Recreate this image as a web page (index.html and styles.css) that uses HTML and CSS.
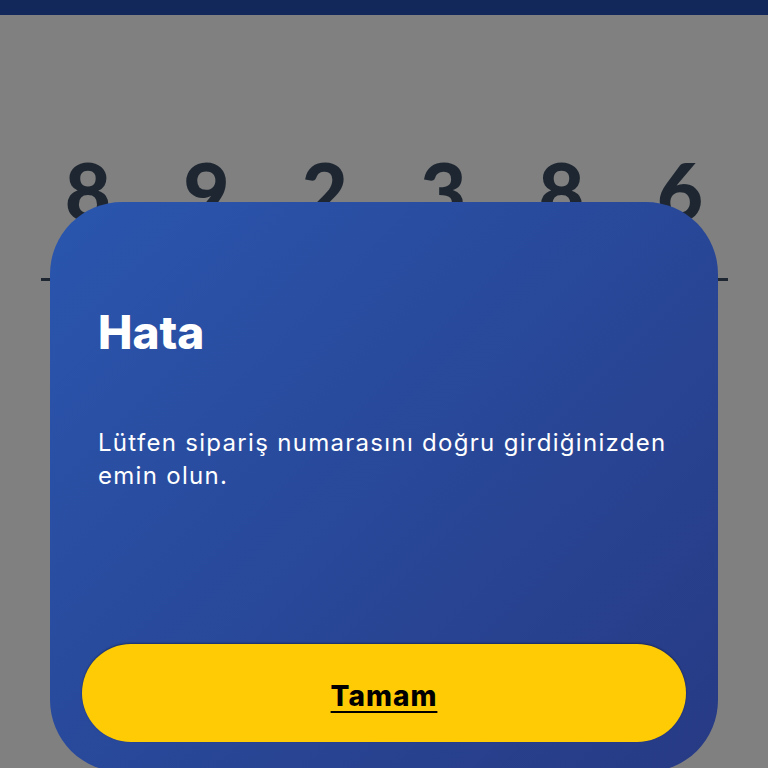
FILE: index.html
```html
<!DOCTYPE html>
<html lang="tr">

<head>
  <meta charset="UTF-8">
  <meta name="viewport" content="width=device-width, initial-scale=1.0">
  <title>Sipariş Takibi</title>
  <link rel="stylesheet" href="styles.css">
</head>

<body>
  <header class="topbar"></header>

  <main class="code-entry">
    <div class="digits">
      <span class="digit">8</span>
      <span class="digit">9</span>
      <span class="digit">2</span>
      <span class="digit">3</span>
      <span class="digit">8</span>
      <span class="digit">6</span>
    </div>
    <div class="digits-line"></div>
  </main>

  <!-- error modal, sits over the dimmed page -->
  <div class="modal">
    <h2 class="modal-title">Hata</h2>
    <p class="modal-text">Lütfen sipariş numarasını doğru girdiğinizden emin olun.</p>
    <button class="modal-button">Tamam</button>
  </div>
</body>

</html>
```

FILE: styles.css
```css
body {
  margin: 0;
  height: 768px;
  overflow: hidden;
  background-color: #808080;
  font-family: Inter, Lato, sans-serif;
}

.topbar {
  height: 15px;
  background-color: #13285a;
}

.code-entry {
  padding: 127px 40px 0 41px;
}

.digits {
  display: flex;
  justify-content: space-between;
  padding: 0 18px 0 17px;
}

.digit {
  width: 60px;
  text-align: center;
  font-family: Lato, sans-serif;
  font-size: 80px;
  font-weight: 900;
  line-height: 96px;
  color: #1e2731;
}

.digits-line {
  margin-top: 40px;
  height: 3px;
  background-color: #1e2731;
}

.modal {
  position: absolute;
  left: 50px;
  top: 202px;
  width: 668px;
  height: 570px;
  box-sizing: border-box;
  padding: 0 32px 30px;
  display: flex;
  flex-direction: column;
  border-radius: 72px;
  background: linear-gradient(135deg, #2a56ae 0%, #273a84 100%);
  color: #ffffff;
}

.modal-title {
  margin: 102px 0 0 16px;
  font-size: 46px;
  font-weight: 800;
  line-height: 56px;
}

.modal-text {
  margin: 66px 0 0 16px;
  padding-right: 10px;
  font-size: 24px;
  letter-spacing: 1.3px;
  line-height: 33px;
}

.modal-button {
  margin-top: auto;
  height: 98px;
  padding-top: 6px;
  border: none;
  border-radius: 49px;
  background-color: #ffcb05;
  box-shadow: 0 -1px 2px rgba(0, 0, 0, 0.35);
  color: #000000;
  font-family: inherit;
  font-size: 28px;
  font-weight: 800;
  letter-spacing: 1px;
  text-decoration: underline;
  text-decoration-thickness: 2px;
  text-underline-offset: 5px;
  cursor: pointer;
}
```
